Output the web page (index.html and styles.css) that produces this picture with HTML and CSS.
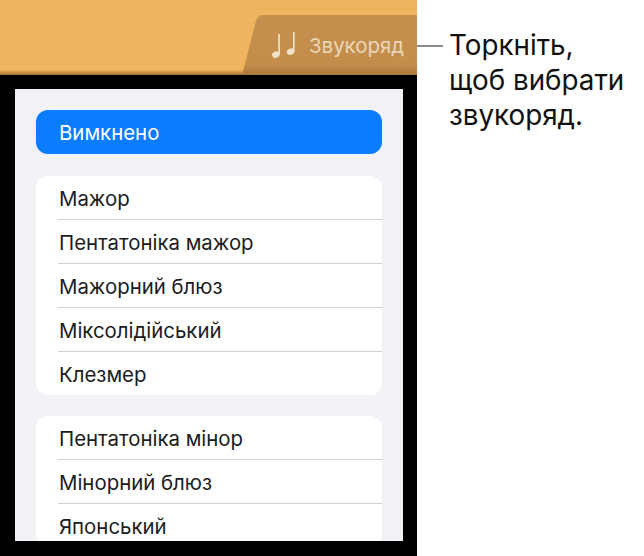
FILE: index.html
```html
<!DOCTYPE html>
<html lang="uk">
<head>
  <meta charset="UTF-8" />
  <title>Звукоряд</title>
  <link rel="stylesheet" href="styles.css">
</head>
<body>
  <div class="shot">
    <div class="device">
      <header class="wood">
        <div class="tab">
          <svg class="notes" width="24" height="28" viewBox="0 0 24 28">
            <ellipse cx="3.9" cy="22.6" rx="4" ry="3.1" transform="rotate(-22 3.9 22.6)" />
            <rect x="6.2" y="2" width="1.7" height="20" />
            <ellipse cx="18.7" cy="19.6" rx="4" ry="3.1" transform="rotate(-22 18.7 19.6)" />
            <rect x="21" y="0" width="1.7" height="19" />
          </svg>
          <span class="tab-label">Звукоряд</span>
        </div>
      </header>
      <div class="bezel">
        <div class="panel">
          <div class="off-btn">Вимкнено</div>
          <div class="group">
            <div class="row">Мажор</div>
            <div class="row">Пентатоніка мажор</div>
            <div class="row">Мажорний блюз</div>
            <div class="row">Міксолідійський</div>
            <div class="row">Клезмер</div>
          </div>
          <div class="group">
            <div class="row">Пентатоніка мінор</div>
            <div class="row">Мінорний блюз</div>
            <div class="row">Японський</div>
          </div>
        </div>
      </div>
    </div>
    <div class="callout">
      <div class="callout-line"></div>
      <p class="callout-text">Торкніть,<br>щоб вибрати<br>звукоряд.</p>
    </div>
  </div>
</body>
</html>
```

FILE: styles.css
```css
* {
  margin: 0;
  padding: 0;
  box-sizing: border-box;
  font-family: Inter, 'Liberation Sans', sans-serif;
}

body {
  background-color: #fff;
  color: #111;
}

.shot {
  display: flex;
  width: 644px;
  height: 556px;
  overflow: hidden;
}

.device {
  width: 417px;
  height: 556px;
  flex-shrink: 0;
  display: flex;
  flex-direction: column;
}

.wood {
  height: 75px;
  flex-shrink: 0;
  display: flex;
  justify-content: flex-end;
  align-items: flex-end;
  background-color: #f0b45f;
  background-image:
    linear-gradient(to bottom, rgba(120, 70, 10, 0) 70px, rgba(110, 65, 10, 0.6) 75px),
    repeating-linear-gradient(to bottom, rgba(255, 255, 255, 0.012) 0 1px, rgba(170, 100, 20, 0.018) 1px 3px, rgba(255, 255, 255, 0.01) 3px 7px);
}

.tab {
  width: 175px;
  height: 60px;
  display: flex;
  justify-content: flex-end;
  align-items: center;
  padding: 0 13px 0 0;
  gap: 13px;
  background-image: linear-gradient(to bottom, #c5904e 0, #c38d4b 50px, #a97738 60px);
  clip-path: polygon(0 100%, 14px 6px, 16px 2px, 20px 0, 100% 0, 100% 100%);
}

.notes {
  fill: #f2e2c8;
  flex-shrink: 0;
  margin-top: 2px;
}

.tab-label {
  font-size: 20.4px;
  color: #ecd6b8;
}

.bezel {
  flex: 1;
  min-height: 0;
  background-color: #000;
  padding: 14px 14px 15px 15px;
}

.panel {
  height: 100%;
  overflow: hidden;
  background-color: #f1f1f6;
  padding: 21px 21px 0;
}

.off-btn {
  height: 44px;
  display: flex;
  align-items: center;
  padding: 1px 0 0 23px;
  border-radius: 12px;
  background-color: #0a7cff;
  color: #fff;
  font-size: 20.4px;
  margin-bottom: 22px;
}

.group {
  background-color: #fff;
  border-radius: 12px;
  margin-bottom: 21px;
  padding-left: 22px;
}

.row {
  height: 44px;
  display: flex;
  align-items: center;
  padding: 1px 0 0 1px;
  font-size: 20.4px;
  color: #1c1c1e;
  border-bottom: 1px solid #d3d3d6;
}

.row:last-child {
  height: 43px;
  border-bottom: none;
}

.callout {
  flex: 1;
  display: flex;
  align-items: flex-start;
  padding-top: 28px;
}

.callout-line {
  width: 26px;
  height: 2px;
  margin-top: 17px;
  background-color: #8a8a8a;
  flex-shrink: 0;
}

.callout-text {
  margin-left: 6px;
  font-size: 27.8px;
  line-height: 35px;
  color: #111;
}
```
